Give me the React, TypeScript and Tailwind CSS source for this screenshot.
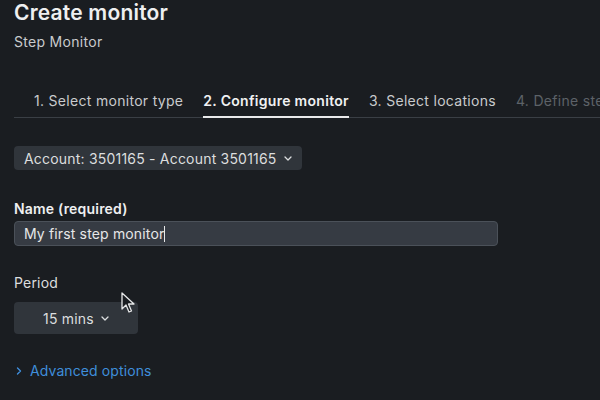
import React from "react";

const Chevron = ({ className = "" }: { className?: string }) => (
  <svg width="8" height="5" viewBox="0 0 8 5" className={className} fill="none">
    <path d="M1 1l3 3 3-3" stroke="currentColor" strokeWidth="1.3" strokeLinecap="round" strokeLinejoin="round" />
  </svg>
);

export default function App() {
  return (
    <div
      className="relative w-[600px] h-[400px] overflow-hidden bg-[#1a1d21] text-[#e6e7e8]"
      style={{ fontFamily: "Inter, 'Open Sans', sans-serif" }}
    >
      <div className="pl-[14px] pt-[1px]">
        <h1 className="h-[24px] text-[21px] leading-[24px] font-semibold text-[#eeeff0] tracking-[0.2px]">Create monitor</h1>
        <div className="mt-[9px] text-[14px] leading-[16px] text-[#c9cbcd] tracking-[0.3px]">Step Monitor</div>

        <div className="mt-[43px] flex border-b border-[#3a3f45] text-[14px] leading-[16px] whitespace-nowrap tracking-[0.3px]">
          <div className="ml-[20px] pb-[8px] text-[#c9cbcd]">1. Select monitor type</div>
          <div className="ml-[20px] pb-[6px] font-semibold text-[#f0f1f2] border-b-2 border-[#e8e9ea] -mb-[1px]">2. Configure monitor</div>
          <div className="ml-[20px] pb-[8px] text-[#c9cbcd]">3. Select locations</div>
          <div className="ml-[20px] pb-[8px] text-[#5d6268]">4. Define steps</div>
        </div>

        <button className="mt-[28px] flex items-center gap-[7px] h-[24px] px-[10px] rounded-[4px] bg-[#30353b] text-[14px] tracking-[0.2px] text-[#dcdedf]">
          <span>Account: 3501165 - Account 3501165</span>
          <Chevron className="text-[#dcdedf]" />
        </button>

        <div className="mt-[31px] text-[14px] leading-[16px] font-semibold text-[#eeeff0] tracking-[0.2px]">Name (required)</div>
        <div className="mt-[4px] w-[484px] h-[25px] rounded-[4px] bg-[#363b43] border border-[#4b5159] flex items-center px-[9px] text-[14px] tracking-[0.15px] text-[#e6e7e8]">
          My first step monitor
          <span className="inline-block w-[1px] h-[16px] bg-[#e6e7e8]" />
        </div>

        <div className="mt-[29px] text-[14px] leading-[16px] text-[#dcdedf] tracking-[0.2px]">Period</div>
        <button className="mt-[11px] w-[124px] h-[32px] rounded-[4px] bg-[#30353b] flex items-center justify-center gap-[7px] text-[14px] tracking-[0.2px] text-[#dcdedf]">
          <span>15 mins</span>
          <Chevron />
        </button>

        <div className="mt-[29px] flex items-center gap-[8px] text-[14px] leading-[16px] text-[#3f8edb] tracking-[0.1px]">
          <svg width="6" height="8" viewBox="0 0 6 8" fill="none" className="ml-[2px]">
            <path d="M1.5 1l3 3-3 3" stroke="currentColor" strokeWidth="1.4" strokeLinecap="round" strokeLinejoin="round" />
          </svg>
          <span>Advanced options</span>
        </div>
      </div>

      <svg className="absolute left-[121px] top-[292px]" width="16" height="22" viewBox="0 0 16 22">
        <path d="M1 1v16l4-4 3 7 2.5-1-3-7h5.5z" fill="#1a1d21" stroke="#e6e7e8" strokeWidth="1.3" strokeLinejoin="round" />
      </svg>
    </div>
  );
}
